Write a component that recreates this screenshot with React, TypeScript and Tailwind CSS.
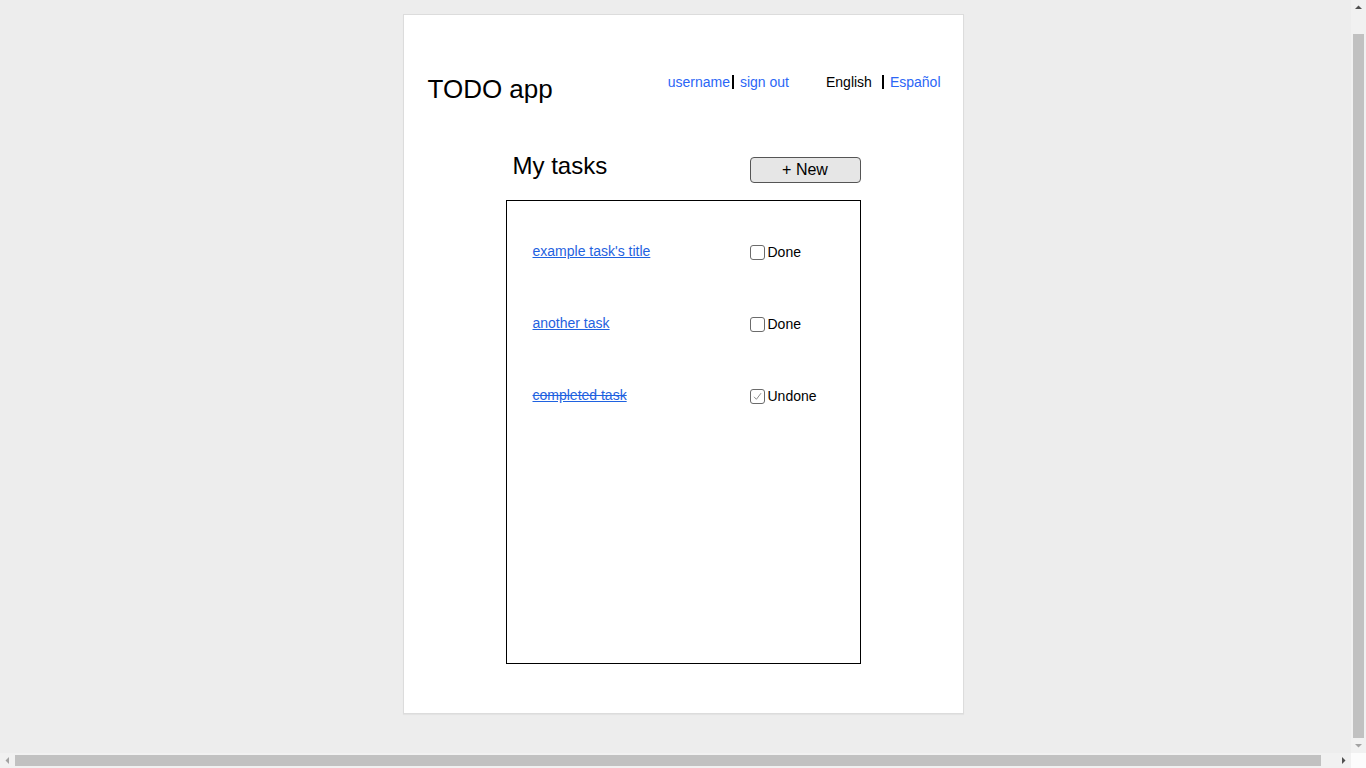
import React from "react";

type Task = { title: string; done: boolean };

const tasks: Task[] = [
  { title: "example task's title", done: false },
  { title: "another task", done: false },
  { title: "completed task", done: true },
];

function Check({ checked }: { checked: boolean }) {
  return (
    <span className="flex h-[15px] w-[15px] items-center justify-center rounded-[3px] border-[1.5px] border-[#6b6b6b] bg-white">
      {checked && (
        <svg width="11" height="11" viewBox="0 0 11 11" fill="none">
          <path d="M2 5.8 L4.4 8.3 L9 2.2" stroke="#8c8c8c" strokeWidth="1" />
        </svg>
      )}
    </span>
  );
}

function Arrow({ dir, dark }: { dir: "up" | "down" | "left" | "right"; dark: boolean }) {
  const fill = dark ? "#505050" : "#a3a3a3";
  const pts =
    dir === "up"
      ? "4,9 11,9 7.5,5.5"
      : dir === "down"
      ? "4,6 11,6 7.5,9.5"
      : dir === "left"
      ? "9,4 9,11 5.5,7.5"
      : "6,4 6,11 9.5,7.5";
  return (
    <svg width="15" height="15" viewBox="0 0 15 15" className="shrink-0">
      <polygon points={pts} fill={fill} />
    </svg>
  );
}

function Main() {
  return (
    <div className="w-[1366px] pt-[14px] font-['Liberation_Sans',Arial,sans-serif] text-black">
      <div className="mx-auto h-[700px] w-[561px] border border-[#dcdcdc] bg-white px-[24px] pt-[59px] shadow-[0_1px_1px_rgba(0,0,0,0.04)]">
        <div className="flex items-start justify-between">
          <h1 className="text-[26px] leading-[30px]">TODO app</h1>
          <div className="mr-[-2px] flex items-center text-[14px] leading-[16px]">
            <a href="#" className="text-[#2b66f6]">username</a>
            <span className="ml-[2px] h-[14px] w-[2px] bg-black" />
            <a href="#" className="ml-[6px] text-[#2b66f6]">sign out</a>
            <span className="ml-[37px]">English</span>
            <span className="ml-[10px] h-[14px] w-[2px] bg-black" />
            <a href="#" className="ml-[6px] text-[#2b66f6]">Español</a>
          </div>
        </div>

        <div className="mx-auto mt-[48px] w-[355px]">
          <div className="flex items-start justify-between">
            <h2 className="pl-[7px] text-[24px] leading-[28px]">My tasks</h2>
            <button className="mt-[5px] flex h-[26px] w-[111px] items-center justify-center rounded-[4px] border border-[#555] bg-[#e6e6e6] text-[16px] leading-[18px] text-black">
              + New
            </button>
          </div>

          <div className="mt-[17px] h-[464px] border border-black pl-[26px] pt-[42px]">
            <div className="flex flex-col gap-[56px]">
              {tasks.map((t) => (
                <div key={t.title} className="grid h-[16px] grid-cols-[217px_1fr] text-[14px] leading-[16px]">
                  <a
                    href="#"
                    className={
                      t.done
                        ? "text-[#1f62e0] [text-decoration-line:underline_line-through]"
                        : "text-[#1f62e0] underline"
                    }
                  >
                    {t.title}
                  </a>
                  <label className="flex translate-y-[1px] items-center gap-[3px]">
                    <Check checked={t.done} />
                    <span>{t.done ? "Undone" : "Done"}</span>
                  </label>
                </div>
              ))}
            </div>
          </div>
        </div>
      </div>
    </div>
  );
}

export default function App() {
  return (
    <div className="flex h-screen w-screen flex-col overflow-hidden bg-[#ededed]">
      <div className="flex min-h-0 flex-1">
        <div className="min-w-0 flex-1 overflow-hidden">
          <Main />
        </div>
        <div className="flex w-[15px] flex-col bg-[#f1f1f1]">
          <Arrow dir="up" dark />
          <div className="flex flex-1 flex-col px-[2px] pt-[19px]">
            <div className="flex-1 bg-[#c1c1c1]" />
          </div>
          <Arrow dir="down" dark={false} />
        </div>
      </div>
      <div className="flex h-[15px]">
        <div className="flex flex-1 bg-[#f1f1f1]">
          <Arrow dir="left" dark={false} />
          <div className="flex flex-1 py-[2px] pr-[15px]">
            <div className="flex-1 bg-[#c1c1c1]" />
          </div>
          <Arrow dir="right" dark />
        </div>
        <div className="w-[15px] bg-[#fcfcfc]" />
      </div>
    </div>
  );
}
